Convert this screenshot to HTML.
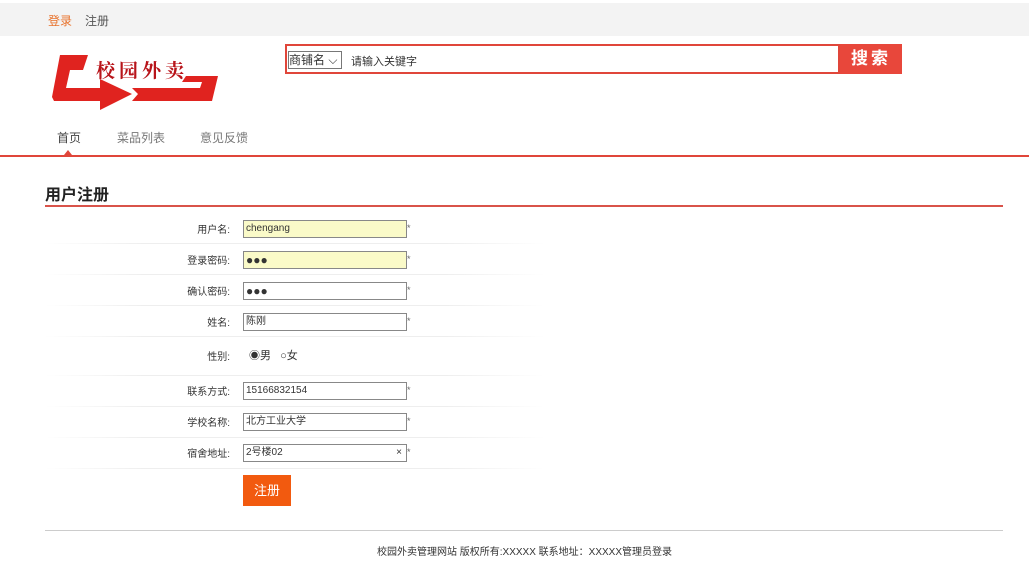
<!DOCTYPE html><html><head><meta charset="utf-8"><style>
body{margin:0;width:1029px;height:576px;background:#fff;font-family:"Liberation Sans","Noto Sans CJK SC",sans-serif;font-size:12px;color:#333;position:relative;overflow:hidden}
.a{position:absolute}
.top{left:0;top:3px;width:1029px;height:33px;background:#f3f3f3}
.row{position:absolute;left:45px;width:500px;height:1px;background:linear-gradient(90deg,#fff,#eee 20%,#eee 80%,#fff)}
.lab{position:absolute;width:230px;text-align:right;font-size:10px;color:#333}
.inp{position:absolute;left:243px;width:160px;height:16px;border:1px solid #888;font-size:10px;line-height:16px;padding-left:2px;background:#fff}
.st{position:absolute;left:407px;font-size:9px;color:#666}
</style></head><body>
<div class="a top"></div>
<div class="a" style="left:48px;top:12px;color:#e8712a">登录</div>
<div class="a" style="left:85px;top:12px;color:#555">注册</div>
<svg class="a" style="left:50px;top:52px" width="170" height="58" viewBox="0 0 170 58">
<path d="M10 3 L38 3 L33 18 L20 18 L16 36 L50 36 L50 27 L82 42 L50 58 L50 49 L4 49 L2 45 Z" fill="#e0231f"/>
<path d="M82 36 L150 36 L152 30 L132 30 L136 24 L168 24 L162 49 L82 49 L88 42 Z" fill="#e0231f"/>
<text x="46" y="25" font-size="19" font-weight="bold" fill="#b8141a" font-family="Noto Serif CJK SC,serif" letter-spacing="4">校园外卖</text>
</svg>
<div class="a" style="left:285px;top:44px;width:551px;height:26px;border:2px solid #e0463a"></div>
<div class="a" style="left:288px;top:51px;width:52px;height:16px;border:1px solid #777;font-size:12px;line-height:16px">商铺名 ⌵</div>
<div class="a" style="left:351px;top:53px;font-size:11px">请输入关键字</div>
<div class="a" style="left:840px;top:44px;width:62px;height:30px;background:#e8473b;color:#fff;font-size:17px;font-weight:bold;text-align:center;line-height:30px;letter-spacing:3px">搜索</div>
<div class="a" style="left:57px;top:129px;font-size:12px;color:#444">首页</div>
<div class="a" style="left:117px;top:129px;font-size:12px;color:#777">菜品列表</div>
<div class="a" style="left:200px;top:129px;font-size:12px;color:#777">意见反馈</div>
<div class="a" style="left:64px;top:150px;width:0;height:0;border-left:4px solid transparent;border-right:4px solid transparent;border-bottom:5px solid #e0463a"></div>
<div class="a" style="left:0;top:155px;width:1029px;height:2px;background:#e0463a"></div>
<div class="a" style="left:45px;top:181px;font-size:16px;font-weight:bold;color:#222">用户注册</div>
<div class="a" style="left:45px;top:205px;width:958px;height:2px;background:#d9534a"></div>
<div class="row" style="top:243px"></div><div class="row" style="top:274px"></div><div class="row" style="top:305px"></div><div class="row" style="top:336px"></div><div class="row" style="top:375px"></div><div class="row" style="top:406px"></div><div class="row" style="top:437px"></div><div class="row" style="top:468px"></div>
<div class="lab" style="left:0;top:221px">用户名:</div><div class="inp" style="top:220px;background:#fafac8">chengang</div><div class="st" style="top:223px">*</div>
<div class="lab" style="left:0;top:252px">登录密码:</div><div class="inp" style="top:251px;background:#fafac8;font-size:12px">●●●</div><div class="st" style="top:254px">*</div>
<div class="lab" style="left:0;top:283px">确认密码:</div><div class="inp" style="top:282px;font-size:12px">●●●</div><div class="st" style="top:285px">*</div>
<div class="lab" style="left:0;top:314px">姓名:</div><div class="inp" style="top:313px">陈刚</div><div class="st" style="top:316px">*</div>
<div class="lab" style="left:0;top:348px">性别:</div><div class="a" style="left:249px;top:347px;font-size:11px">◉男 &nbsp;&nbsp;○女</div>
<div class="lab" style="left:0;top:383px">联系方式:</div><div class="inp" style="top:382px">15166832154</div><div class="st" style="top:385px">*</div>
<div class="lab" style="left:0;top:414px">学校名称:</div><div class="inp" style="top:413px">北方工业大学</div><div class="st" style="top:416px">*</div>
<div class="lab" style="left:0;top:445px">宿舍地址:</div><div class="inp" style="top:444px">2号楼02<span style="position:absolute;right:4px">×</span></div><div class="st" style="top:447px">*</div>
<div class="a" style="left:243px;top:475px;width:48px;height:31px;background:#f25a0f;color:#fff;font-size:13px;text-align:center;line-height:31px">注册</div>
<div class="a" style="left:45px;top:530px;width:958px;height:1px;background:#ccc"></div>
<div class="a" style="left:0;top:543px;width:1049px;text-align:center;font-size:10px;color:#333">校园外卖管理网站 版权所有:XXXXX 联系地址：XXXXX管理员登录</div>
</body></html>
